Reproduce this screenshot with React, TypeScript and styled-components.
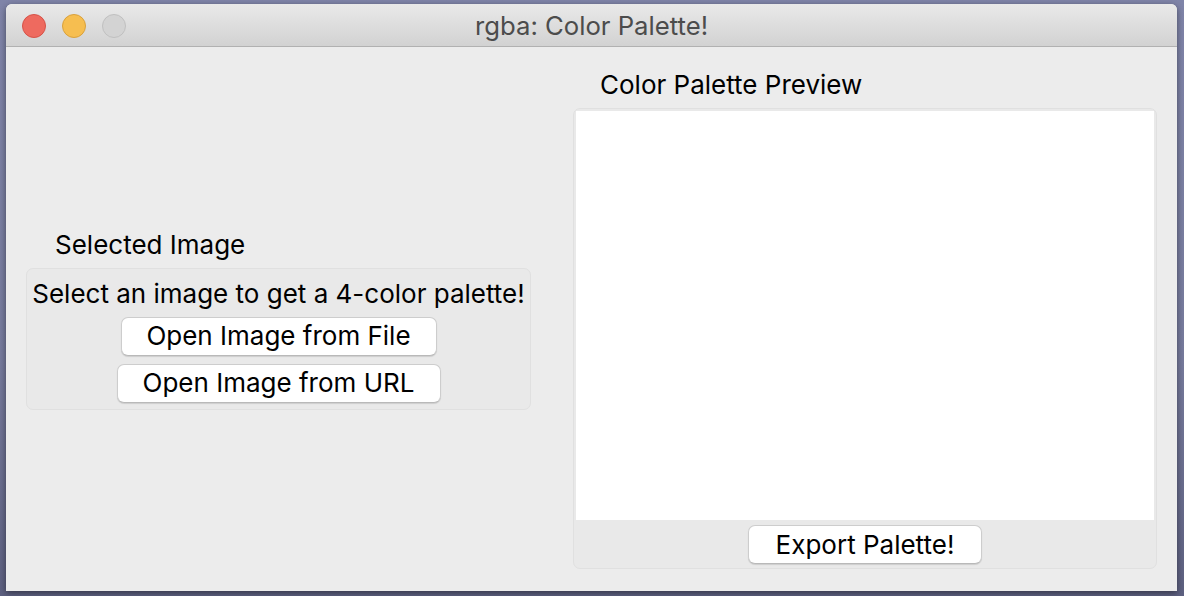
import React from "react";
import styled, { createGlobalStyle } from "styled-components";

const Global = createGlobalStyle`
  html, body { margin: 0; padding: 0; }
  body {
    width: 1184px;
    height: 596px;
    overflow: hidden;
    font-family: Inter, "Liberation Sans", Arial, sans-serif;
  }
`;

const Desktop = styled.div`
  width: 1184px;
  height: 596px;
  box-sizing: border-box;
  padding: 4px 7px 5px 6px;
  display: flex;
  background: linear-gradient(180deg, #7f84a8 0%, #767a9c 60%, #5d6080 100%);
`;

const Window = styled.div`
  flex: 1;
  display: flex;
  flex-direction: column;
  border-radius: 6px 6px 0 0;
  overflow: hidden;
  background: #ececec;
  box-shadow: 0 2px 6px rgba(0, 0, 0, 0.45);
`;

const TitleBar = styled.div`
  height: 42px;
  flex: none;
  position: relative;
  display: flex;
  align-items: center;
  justify-content: center;
  background: linear-gradient(180deg, #e9e9e9 0%, #d2d2d2 100%);
  border-bottom: 1px solid #b1b1b1;
`;

const Lights = styled.div`
  position: absolute;
  left: 16px;
  top: 10px;
  display: flex;
  gap: 16px;
`;

const Light = styled.div<{ $fill: string; $edge: string }>`
  width: 24px;
  height: 24px;
  border-radius: 50%;
  background: ${(p) => p.$fill};
  border: 1px solid ${(p) => p.$edge};
  box-sizing: border-box;
`;

const Title = styled.div`
  font-family: Inter, "Liberation Sans", Arial, sans-serif;
  font-size: 25.7px;
  color: #4c4c4c;
`;

const Content = styled.div`
  flex: 1;
  display: flex;
  gap: 42px;
  padding: 23px 20px 22px 20px;
`;

const LeftColumn = styled.div`
  width: 505px;
  display: flex;
  flex-direction: column;
  justify-content: center;
`;

const RightColumn = styled.div`
  flex: 1;
  display: flex;
  flex-direction: column;
`;

const GroupLabel = styled.div<{ $indent: number }>`
  font-size: 26px;
  color: #000;
  padding-left: ${(p) => p.$indent}px;
  height: 38px;
  line-height: 30px;
`;

const GroupBox = styled.div<{ $grow?: boolean }>`
  border: 1px solid #e0e0e0;
  border-radius: 7px;
  background: #e9e9e9;
  box-sizing: border-box;
  display: flex;
  flex-direction: column;
  align-items: center;
  ${(p) => (p.$grow ? "flex: 1;" : "")}
`;

const LeftBox = styled(GroupBox)`
  height: 142px;
  padding-top: 11px;
  gap: 8px;
`;

const RightBox = styled(GroupBox)`
  padding: 2px 2px 4px 2px;
`;

const Message = styled.div`
  font-size: 26px;
  color: #000;
  line-height: 28px;
  margin-bottom: 1px;
`;

const Preview = styled.div`
  align-self: stretch;
  flex: 1;
  background: #ffffff;
`;

const Button = styled.button<{ $w: number }>`
  width: ${(p) => p.$w}px;
  height: 39px;
  box-sizing: border-box;
  background: #ffffff;
  border: 1px solid #cdcdcd;
  border-bottom-color: #b9b9b9;
  border-radius: 7px;
  box-shadow: 0 1px 1px rgba(0, 0, 0, 0.12);
  font-family: Inter, "Liberation Sans", Arial, sans-serif;
  font-size: 26px;
  line-height: 30px;
  color: #000;
  padding: 0;
  flex: none;
`;

const ExportButton = styled(Button)`
  margin-top: 5px;
`;

export default function App() {
  return (
    <>
      <Global />
      <Desktop>
        <Window>
          <TitleBar>
            <Lights>
              <Light $fill="#ee6a5f" $edge="#d65248" />
              <Light $fill="#f6be50" $edge="#d9a13c" />
              <Light $fill="#d3d3d3" $edge="#c0c0c0" />
            </Lights>
            <Title>rgba: Color Palette!</Title>
          </TitleBar>
          <Content>
            <LeftColumn>
              <GroupLabel $indent={29}>Selected Image</GroupLabel>
              <LeftBox>
                <Message>Select an image to get a 4-color palette!</Message>
                <Button $w={316}>Open Image from File</Button>
                <Button $w={324}>Open Image from URL</Button>
              </LeftBox>
            </LeftColumn>
            <RightColumn>
              <GroupLabel $indent={27}>Color Palette Preview</GroupLabel>
              <RightBox $grow>
                <Preview />
                <ExportButton $w={234}>Export Palette!</ExportButton>
              </RightBox>
            </RightColumn>
          </Content>
        </Window>
      </Desktop>
    </>
  );
}
